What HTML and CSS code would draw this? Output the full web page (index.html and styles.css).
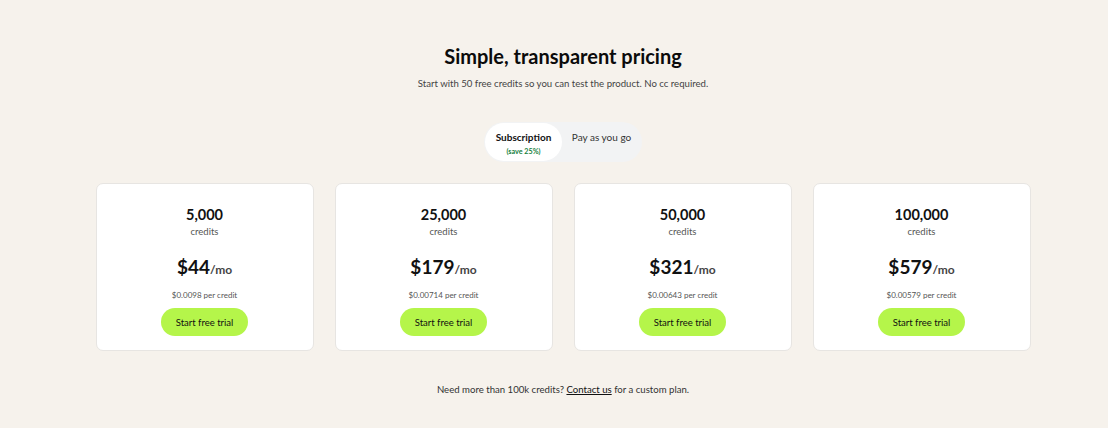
FILE: index.html
```html
<!DOCTYPE html>
<html>
<head>
<meta charset="utf-8">
<link rel="stylesheet" href="styles.css">
</head>
<body>
<main class="page">
  <h1 class="title">Simple, transparent pricing</h1>
  <p class="subtitle">Start with 50 free credits so you can test the product. No cc required.</p>
  <div class="toggle">
    <div class="opt active">
      <span class="opt-label">Subscription</span>
      <span class="save">(save 25%)</span>
    </div>
    <div class="opt">
      <span class="opt-label plain">Pay as you go</span>
    </div>
  </div>
  <div class="cards">
    <div class="card">
      <div class="amount">5,000</div>
      <div class="unit">credits</div>
      <div class="price">$44<span class="mo">/mo</span></div>
      <div class="per">$0.0098 per credit</div>
      <button class="cta">Start free trial</button>
    </div>
    <div class="card">
      <div class="amount">25,000</div>
      <div class="unit">credits</div>
      <div class="price">$179<span class="mo">/mo</span></div>
      <div class="per">$0.00714 per credit</div>
      <button class="cta">Start free trial</button>
    </div>
    <div class="card">
      <div class="amount">50,000</div>
      <div class="unit">credits</div>
      <div class="price">$321<span class="mo">/mo</span></div>
      <div class="per">$0.00643 per credit</div>
      <button class="cta">Start free trial</button>
    </div>
    <div class="card">
      <div class="amount">100,000</div>
      <div class="unit">credits</div>
      <div class="price">$579<span class="mo">/mo</span></div>
      <div class="per">$0.00579 per credit</div>
      <button class="cta">Start free trial</button>
    </div>
  </div>
  <p class="footer">Need more than 100k credits? <a href="#" class="link">Contact us</a> for a custom plan.</p>
</main>
</body>
</html>
```

FILE: styles.css
```css
* { box-sizing: border-box; }
html, body { margin: 0; padding: 0; }
body {
  background: #f6f2ec;
  font-family: Lato, "Open Sans", "DejaVu Sans", sans-serif;
  color: #111;
  width: 1108px;
  height: 428px;
  overflow: hidden;
}
.page {
  padding: 42px 0 0 18px;
  display: flex;
  flex-direction: column;
  align-items: center;
}
.title {
  margin: 0;
  font-size: 20px;
  font-weight: 700;
  line-height: 28px;
  color: #0b0b0b;
}
.subtitle {
  margin: 7px 0 0;
  font-size: 9.6px;
  line-height: 14px;
  color: #444;
}
.toggle {
  margin-top: 31px;
  display: flex;
  border-radius: 20px;
  padding: 1px;
  background: #f2f3f4;
}
.opt {
  width: 77px;
  height: 38px;
  border-radius: 19px;
  display: flex;
  flex-direction: column;
  align-items: center;
  justify-content: flex-start;
  padding-top: 7px;
}
.opt + .opt { width: 79px; }
.opt.active { background: #fff; }
.opt-label {
  font-size: 10px;
  line-height: 14px;
  font-weight: 700;
  color: #111;
}
.opt-label.plain {
  font-weight: 400;
  color: #333;
}
.save {
  font-size: 7.2px;
  line-height: 15px;
  color: #15803d;
  font-weight: 700;
}
.cards {
  margin-top: 21px;
  display: grid;
  grid-template-columns: repeat(4, 218px);
  gap: 21px;
}
.card {
  background: #fff;
  border: 1px solid #e7e5e2;
  border-radius: 7px;
  height: 168px;
  display: flex;
  flex-direction: column;
  align-items: center;
  padding-top: 21px;
}
.amount {
  font-size: 14.5px;
  font-weight: 700;
  line-height: 20px;
  color: #111;
}
.unit {
  font-size: 9.5px;
  line-height: 14px;
  color: #555;
}
.price {
  margin-top: 15px;
  font-size: 19px;
  font-weight: 700;
  line-height: 26px;
  color: #111;
}
.mo {
  font-size: 12px;
  font-weight: 700;
  color: #444;
}
.per {
  margin-top: 6px;
  font-size: 8px;
  line-height: 12px;
  color: #555;
}
.cta {
  margin-top: 7px;
  width: 87px;
  height: 28px;
  border: none;
  border-radius: 14px;
  background: #b5f54a;
  font-family: inherit;
  font-size: 9.5px;
  color: #111;
  padding: 0;
}
.footer {
  margin: 32px 0 0;
  font-size: 9.6px;
  line-height: 14px;
  color: #333;
}
.link {
  color: #111;
  text-decoration: underline;
}
```
